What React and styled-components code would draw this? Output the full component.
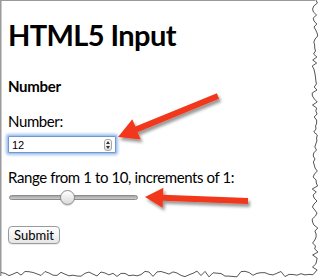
import React from 'react';
import styled, { createGlobalStyle } from 'styled-components';

const GlobalStyle = createGlobalStyle`
  html, body {
    margin: 0;
    padding: 0;
    background: #ffffff;
  }
  body {
    font-family: Lato, "Liberation Sans", sans-serif;
    color: #000000;
  }
`;

const Page = styled.div`
  position: relative;
  width: 322px;
  height: 280px;
  box-sizing: border-box;
  padding-left: 8px;
  overflow: hidden;
  background: #ffffff;
`;

const Title = styled.h1`
  margin: 17px 0 0;
  font-size: 29px;
  line-height: 36px;
  font-weight: 700;
  letter-spacing: -0.6px;
`;

const SectionTitle = styled.h4`
  margin: 23px 0 0;
  font-size: 15px;
  line-height: 20px;
  font-weight: 700;
  letter-spacing: -0.3px;
`;

const FieldLabel = styled.label`
  display: block;
  margin-top: ${(p) => p.$gap}px;
  font-size: 15px;
  line-height: 20px;
  letter-spacing: -0.4px;
`;

const NumberBox = styled.div`
  display: flex;
  align-items: center;
  width: 108px;
  height: 17px;
  box-sizing: border-box;
  margin-top: 5px;
  border: 1px solid #6f98d2;
  border-radius: 1px;
  background: #ffffff;
  box-shadow: 0 0 0 1px #a8c6ef, 0 0 3px 2px rgba(112, 160, 228, 0.65);
`;

const NumberField = styled.input`
  flex: 1;
  min-width: 0;
  border: 0;
  outline: none;
  padding: 0 0 0 3px;
  background: transparent;
  font-family: "Liberation Sans", sans-serif;
  font-size: 11px;
  color: #000000;
  appearance: textfield;

  &::-webkit-inner-spin-button,
  &::-webkit-outer-spin-button {
    -webkit-appearance: none;
    margin: 0;
  }
`;

const Spinner = styled.span`
  display: flex;
  flex-direction: column;
  align-items: center;
  justify-content: center;
  gap: 2px;
  width: 8px;
  height: 12px;
  margin-right: 3px;
  box-sizing: border-box;
  border: 1px solid #a6a6a6;
  border-radius: 3px;
  background: linear-gradient(#ffffff, #e2e2e2);
`;

const SpinArrow = styled.span`
  width: 0;
  height: 0;
  border-left: 2px solid transparent;
  border-right: 2px solid transparent;
  ${(p) => (p.$down ? 'border-top: 3px solid #333;' : 'border-bottom: 3px solid #333;')}
`;

const Slider = styled.input`
  -webkit-appearance: none;
  appearance: none;
  display: block;
  width: 129px;
  height: 15px;
  margin: 3px 0 0 1px;
  padding: 0;
  background: transparent;

  &::-webkit-slider-runnable-track {
    height: 5px;
    box-sizing: border-box;
    border: 1px solid #8c8c8c;
    border-radius: 3px;
    background: linear-gradient(#a4a4a4, #cfcfcf);
  }

  &::-webkit-slider-thumb {
    -webkit-appearance: none;
    width: 15px;
    height: 15px;
    margin-top: -6px;
    box-sizing: border-box;
    border: 1px solid #8a8a8a;
    border-radius: 50%;
    background: linear-gradient(#ffffff, #dadada);
    box-shadow: 0 1px 1px rgba(0, 0, 0, 0.15);
  }
`;

const SubmitButton = styled.button`
  display: block;
  width: 52px;
  height: 18px;
  margin-top: 21px;
  padding: 0;
  border: 1px solid #9b9b9b;
  border-radius: 4px;
  background: linear-gradient(#ffffff, #e6e6e6);
  box-shadow: 0 1px 1px rgba(0, 0, 0, 0.08);
  font-family: Lato, "Liberation Sans", sans-serif;
  font-size: 13px;
  line-height: 16px;
  color: #000000;
`;

const Overlay = styled.svg`
  position: absolute;
  top: 0;
  left: 0;
  pointer-events: none;
`;

function seeded(seed) {
  let s = seed;
  return () => {
    s = (s * 9301 + 49297) % 233280;
    return s / 233280;
  };
}

function tornEdge() {
  const r = seeded(11);
  const pts = [];
  for (let y = 0; y <= 272; y += 3) pts.push([315 + (r() - 0.5) * 6, y]);
  for (let x = 313; x >= 0; x -= 4) pts.push([x, 274 + (r() - 0.5) * 6]);
  return pts.map(([x, y]) => `${x.toFixed(1)},${y.toFixed(1)}`).join(' ');
}

function arrow([tx, ty], [hx, hy], shaft = 3, headLen = 20, headHalf = 11) {
  const dx = hx - tx;
  const dy = hy - ty;
  const len = Math.hypot(dx, dy);
  const ux = dx / len;
  const uy = dy / len;
  const nx = -uy;
  const ny = ux;
  const bx = hx - ux * headLen;
  const by = hy - uy * headLen;
  const p = (x, y) => `${x.toFixed(1)},${y.toFixed(1)}`;
  return [
    p(tx + nx * shaft, ty + ny * shaft),
    p(bx + nx * shaft, by + ny * shaft),
    p(bx + nx * headHalf, by + ny * headHalf),
    p(hx, hy),
    p(bx - nx * headHalf, by - ny * headHalf),
    p(bx - nx * shaft, by - ny * shaft),
    p(tx - nx * shaft, ty - ny * shaft),
  ].join(' ');
}

const edge = tornEdge();

export default function App() {
  return (
    <>
      <GlobalStyle />
      <Page>
        <Title>HTML5 Input</Title>
        <SectionTitle>Number</SectionTitle>
        <FieldLabel $gap={15}>Number:</FieldLabel>
        <NumberBox>
          <NumberField type="number" defaultValue={12} />
          <Spinner>
            <SpinArrow />
            <SpinArrow $down />
          </Spinner>
        </NumberBox>
        <FieldLabel $gap={14}>Range from 1 to 10, increments of 1:</FieldLabel>
        <Slider type="range" min={1} max={10} step={1} defaultValue={5} />
        <SubmitButton type="button">Submit</SubmitButton>

        <Overlay width="322" height="280" viewBox="0 0 322 280">
          <defs>
            <filter id="shade" x="-20%" y="-20%" width="140%" height="160%">
              <feDropShadow dx="2" dy="3" stdDeviation="1.8" floodColor="#000" floodOpacity="0.4" />
            </filter>
          </defs>
          <line x1="0.75" y1="0" x2="0.75" y2="276" stroke="#9a9a9a" strokeWidth="1.5" />
          <line x1="0" y1="0.5" x2="315" y2="0.5" stroke="#9a9a9a" strokeWidth="1" />
          <polyline points={edge} fill="none" stroke="#555" strokeWidth="1" />
          <g fill="#f2381c" filter="url(#shade)">
            <polygon points={arrow([218, 96], [118, 137])} />
            <polygon points={arrow([248, 201], [145, 197], 3, 18, 10)} />
          </g>
        </Overlay>
      </Page>
    </>
  );
}
